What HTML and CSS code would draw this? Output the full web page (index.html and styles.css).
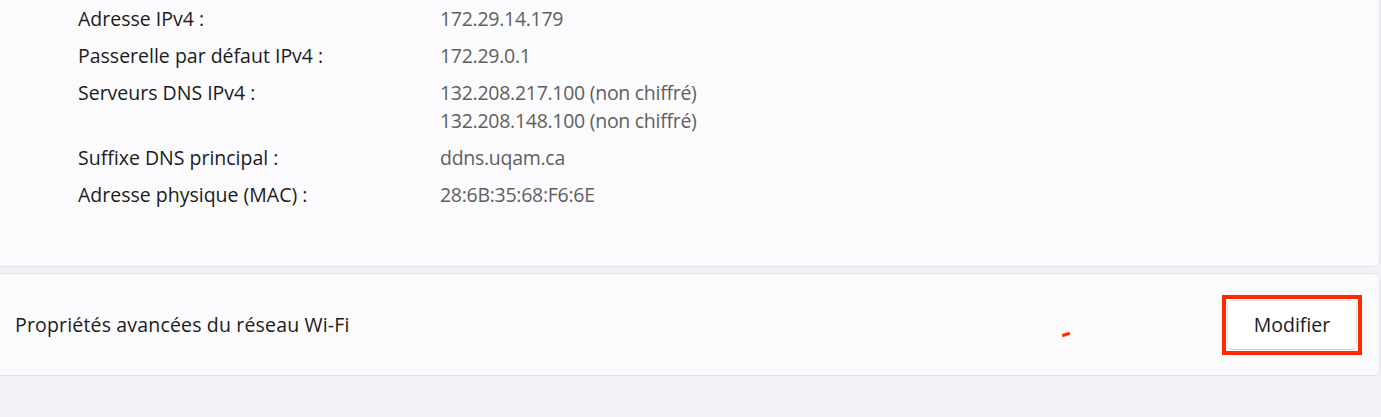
FILE: index.html
```html
<!DOCTYPE html>
<html lang="fr">
<head>
    <meta charset="UTF-8">
    <meta name="viewport" content="width=device-width, initial-scale=1.0">
    <title>Propriétés Wi-Fi</title>
    <link rel="stylesheet" href="styles.css">
</head>
<body>
    <div class="page">
        <section class="card details">
            <div class="row"><span class="label">Adresse IPv4 :</span><span class="value">172.29.14.179</span></div>
            <div class="row"><span class="label">Passerelle par défaut IPv4 :</span><span class="value">172.29.0.1</span></div>
            <div class="row">
                <span class="label">Serveurs DNS IPv4 :</span>
                <span class="value">132.208.217.100 (non chiffré)<br>132.208.148.100 (non chiffré)</span>
            </div>
            <div class="row"><span class="label">Suffixe DNS principal :</span><span class="value">ddns.uqam.ca</span></div>
            <div class="row"><span class="label">Adresse physique (MAC) :</span><span class="value">28:6B:35:68:F6:6E</span></div>
        </section>

        <section class="card setting">
            <span class="setting-title">Propriétés avancées du réseau Wi-Fi</span>
            <span class="mark"></span>
            <div class="highlight">
                <button class="btn">Modifier</button>
            </div>
        </section>
    </div>
</body>
</html>
```

FILE: styles.css
```css
body {
    margin: 0;
    background: #f0f2f6;
    font-family: 'Open Sans', 'Noto Sans', sans-serif;
    color: #1b1b1b;
    overflow: hidden;
}

.page {
    display: flex;
    flex-direction: column;
    gap: 6px;
    margin: -10px 1px 0 -11px;
}

.card {
    background: #fbfbfd;
    border: 1px solid #e3e4e8;
    border-radius: 6px;
}

.details {
    padding: 14px 0 36px 88px;
    display: flex;
    flex-direction: column;
    gap: 9px;
    box-sizing: border-box;
    height: 277px;
}

.row {
    display: flex;
    font-size: 19.5px;
    line-height: 28px;
}

.label {
    width: 362px;
    flex-shrink: 0;
}

.value {
    color: #606060;
    letter-spacing: -0.28px;
}

.setting {
    position: relative;
    display: flex;
    align-items: center;
    justify-content: space-between;
    height: 103px;
    box-sizing: border-box;
    padding: 0 17px 0 25px;
}

.setting-title {
    font-size: 19.5px;
    letter-spacing: 0.17px;
}

.mark {
    position: absolute;
    left: 1072px;
    top: 59px;
    width: 8px;
    height: 3px;
    background: #ff2a00;
    transform: rotate(-18deg);
}

.highlight {
    border: 4px solid #ff2a00;
    padding: 1px;
}

.btn {
    display: block;
    width: 130px;
    height: 50px;
    background: #ffffff;
    border: 1px solid #e6e6e6;
    border-bottom-color: #cfcfcf;
    border-radius: 5px;
    font-family: inherit;
    font-size: 19.5px;
    color: #1b1b1b;
}
```
